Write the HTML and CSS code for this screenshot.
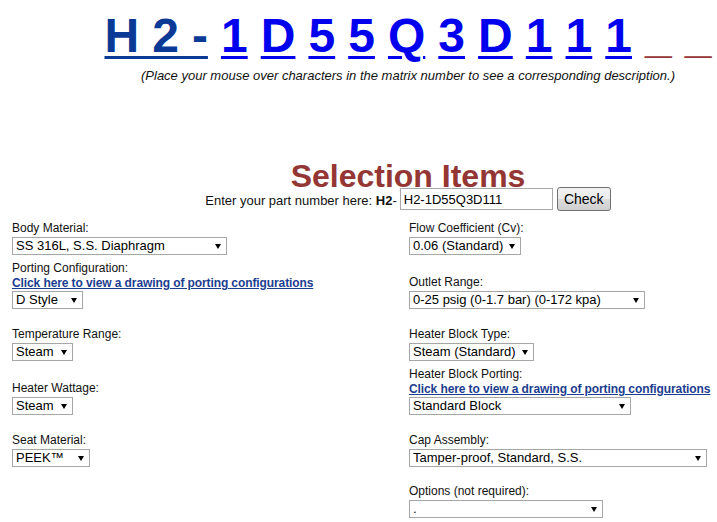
FILE: index.html
```html
<!DOCTYPE html>
<html>
<head>
<meta charset="utf-8">
<title>Selection Items</title>
<link rel="stylesheet" href="styles.css">
</head>
<body>
<div class="page">
  <div class="head">
    <div class="matrix"><a class="m-prefix" href="#">H 2 -</a> <a class="m" href="#">1</a> <a class="m" href="#">D</a> <a class="m" href="#">5</a> <a class="m" href="#">5</a> <a class="m" href="#">Q</a> <a class="m" href="#">3</a> <a class="m" href="#">D</a> <a class="m" href="#">1</a> <a class="m" href="#">1</a> <a class="m" href="#">1</a> <span class="m-blank">_</span> <span class="m-blank">_</span></div>
    <p class="hint">(Place your mouse over characters in the matrix number to see a corresponding description.)</p>
    <h1 class="title">Selection Items</h1>
    <form class="partform">
      <span class="part-label">Enter your part number here: <b>H2</b>-</span>
      <input class="part-input" type="text" value="H2-1D55Q3D111">
      <button class="check" type="button">Check</button>
    </form>
  </div>

  <div class="rows">
    <div class="row">
      <div class="cell">
        <label class="lbl">Body Material:</label>
        <span class="sel w-body"><select><option>SS 316L, S.S. Diaphragm</option></select></span>
      </div>
      <div class="cell">
        <label class="lbl">Flow Coefficient (Cv):</label>
        <span class="sel w-flow"><select><option>0.06 (Standard)</option></select></span>
      </div>
    </div>

    <div class="row tight">
      <div class="cell">
        <label class="lbl">Porting Configuration:</label>
        <a class="drawlink" href="#">Click here to view a drawing of porting configurations</a>
        <span class="sel w-dstyle"><select><option>D Style</option></select></span>
      </div>
      <div class="cell">
        <label class="lbl">Outlet Range:</label>
        <span class="sel w-outlet"><select><option>0-25 psig (0-1.7 bar) (0-172 kpa)</option></select></span>
      </div>
    </div>

    <div class="row loose">
      <div class="cell">
        <label class="lbl">Temperature Range:</label>
        <span class="sel w-steam"><select><option>Steam</option></select></span>
      </div>
      <div class="cell">
        <label class="lbl">Heater Block Type:</label>
        <span class="sel w-hbtype"><select><option>Steam (Standard)</option></select></span>
      </div>
    </div>

    <div class="row tight">
      <div class="cell">
        <label class="lbl">Heater Wattage:</label>
        <span class="sel w-steam"><select><option>Steam</option></select></span>
      </div>
      <div class="cell">
        <label class="lbl">Heater Block Porting:</label>
        <a class="drawlink" href="#">Click here to view a drawing of porting configurations</a>
        <span class="sel w-block"><select><option>Standard Block</option></select></span>
      </div>
    </div>

    <div class="row loose">
      <div class="cell">
        <label class="lbl">Seat Material:</label>
        <span class="sel w-peek"><select><option>PEEK™</option></select></span>
      </div>
      <div class="cell">
        <label class="lbl">Cap Assembly:</label>
        <span class="sel w-cap"><select><option>Tamper-proof, Standard, S.S.</option></select></span>
      </div>
    </div>

    <div class="row mid">
      <div class="cell"></div>
      <div class="cell">
        <label class="lbl">Options (not required):</label>
        <span class="sel w-options"><select><option>.</option></select></span>
      </div>
    </div>
  </div>
</div>
</body>
</html>
```

FILE: styles.css
```css
html, body {
  margin: 0;
  padding: 0;
  overflow: hidden;
  background: #ffffff;
}

body {
  font-family: "Liberation Sans", Arial, sans-serif;
  color: #000000;
}

.page {
  padding: 8px 0 0 8px;
}

.head {
  padding-left: 91px;
}

/* Matrix number */
.matrix {
  font-size: 48px;
  line-height: 55px;
  font-weight: bold;
  text-align: center;
  white-space: nowrap;
  word-spacing: -0.3px;
}

.matrix a {
  text-decoration: underline;
  text-decoration-thickness: 3px;
  text-underline-offset: 4px;
}

.m-prefix {
  color: #0b3a96;
}

.m {
  color: #0000ee;
}

.m-blank {
  color: #943634;
}

.hint {
  margin: 5px 0 0;
  font-size: 13px;
  line-height: 16px;
  font-style: italic;
  text-align: center;
  color: #111;
}

.title {
  margin: 80px 0 0;
  font-size: 32px;
  line-height: 24px;
  font-weight: bold;
  text-align: center;
  color: #943634;
}

.partform {
  margin: -1px 0 0;
  display: flex;
  justify-content: center;
  align-items: center;
  gap: 3px;
  font-size: 13px;
}

.part-label {
  padding-top: 3px;
  color: #111;
}

.part-input {
  box-sizing: border-box;
  width: 153px;
  height: 22px;
  margin: 0;
  padding: 1px 3px;
  border: 1px solid #a9a9a9;
  font-family: "Liberation Sans", Arial, sans-serif;
  font-size: 13px;
  color: #000;
  background: #fff;
}

.check {
  box-sizing: border-box;
  width: 54px;
  height: 24px;
  margin: 0 0 0 1px;
  padding: 0;
  border: 1px solid #707070;
  border-radius: 3px;
  background: linear-gradient(#f2f2f2 0%, #ebebeb 49%, #dddddd 50%, #cfcfcf 100%);
  font-family: "Liberation Sans", Arial, sans-serif;
  font-size: 14px;
  color: #000;
}

/* Selection rows */
.rows {
  margin-top: 10px;
  padding-left: 4px;
}

.row {
  display: grid;
  grid-template-columns: 397px 1fr;
  align-items: end;
}

.row.tight {
  margin-top: 6px;
}

.row.loose {
  margin-top: 18px;
}

.row.mid {
  margin-top: 17px;
}

.cell {
  display: flex;
  flex-direction: column;
  align-items: flex-start;
}

.lbl {
  font-size: 12px;
  line-height: 15px;
  color: #111;
}

.drawlink {
  font-size: 12px;
  line-height: 14px;
  font-weight: bold;
  letter-spacing: -0.1px;
  color: #1c3d8f;
  text-decoration: underline;
  white-space: nowrap;
}

.sel {
  position: relative;
  display: block;
  margin-top: 1px;
}

.sel select {
  -webkit-appearance: none;
  appearance: none;
  box-sizing: border-box;
  display: block;
  width: 100%;
  height: 18px;
  margin: 0;
  padding: 0 14px 0 3px;
  border: 1px solid #a6a6a6;
  border-radius: 0;
  background: #fff;
  font-family: "Liberation Sans", Arial, sans-serif;
  font-size: 13px;
  line-height: 16px;
  color: #000;
}

.sel::after {
  content: "";
  position: absolute;
  right: 6px;
  top: 7px;
  border-left: 3px solid transparent;
  border-right: 3px solid transparent;
  border-top: 5px solid #000;
  pointer-events: none;
}

.w-body { width: 215px; }
.w-dstyle { width: 71px; }
.w-steam { width: 61px; }
.w-peek { width: 78px; }
.w-flow { width: 112px; }
.w-outlet { width: 236px; }
.w-hbtype { width: 125px; }
.w-block { width: 222px; }
.w-cap { width: 298px; }
.w-options { width: 194px; }
```
